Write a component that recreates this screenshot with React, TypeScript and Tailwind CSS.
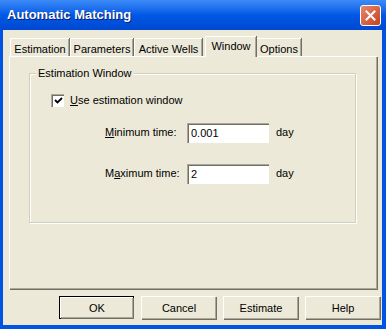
import React from "react";

const font = { fontFamily: '"Liberation Sans", Arial, sans-serif' };

function Tab({ label, active, w }: { label: string; active?: boolean; w: string }) {
  if (active) {
    return (
      <div className={`relative z-10 -mb-[1px] ml-[2px] flex h-[21px] ${w} items-start justify-center border-l border-t border-white bg-[#ECE9D8] pt-[2px] shadow-[inset_-1px_0_0_#ACA899,1px_0_0_#716F64]`}>
        <span className="text-[11px] leading-[14px] text-black">{label}</span>
      </div>
    );
  }
  return (
    <div className={`mr-[1px] mt-[2px] flex h-[18px] ${w} items-start justify-center border-l border-t border-white bg-[#ECE9D8] pt-[3px] shadow-[inset_-1px_0_0_#ACA899,1px_0_0_#716F64]`}>
      <span className="text-[11px] leading-[14px] text-black">{label}</span>
    </div>
  );
}

function Btn({ label, isDefault }: { label: string; isDefault?: boolean }) {
  return (
    <div
      className={`flex h-[23px] w-[75px] items-center justify-center text-[11px] text-black ${
        isDefault ? "border border-black" : ""
      }`}
    >
      <div className="flex h-full w-full items-center justify-center border-l border-t border-white bg-[#ECE9D8] shadow-[inset_-1px_-1px_0_#ACA899,1px_1px_0_#716F64]">
        {label}
      </div>
    </div>
  );
}

function Field({ value }: { value: string }) {
  return (
    <div className="flex h-[20px] w-[82px] items-center border-l border-t border-[#ACA899] bg-white pl-[3px] text-[11px] text-black shadow-[inset_1px_1px_0_#716F64]">
      {value}
    </div>
  );
}

export default function App() {
  return (
    <div style={font} className="flex h-[329px] w-[386px] select-none flex-col overflow-hidden bg-[#0054E3]">
      {/* title bar */}
      <div className="flex h-[30px] shrink-0 items-center justify-between bg-gradient-to-b from-[#3D8BF7] via-[#0058E6] to-[#0049D0] pl-[7px] pr-[5px]">
        <span className="text-[13px] font-bold text-white [text-shadow:1px_1px_0_#0A1E6E]">
          Automatic Matching
        </span>
        <div className="flex h-[21px] w-[21px] items-center justify-center rounded-[3px] border border-white bg-gradient-to-br from-[#E9866A] to-[#C5401C]">
          <svg width="11" height="11" viewBox="0 0 11 11">
            <path d="M1.5 1.5 L9.5 9.5 M9.5 1.5 L1.5 9.5" stroke="white" strokeWidth="2" strokeLinecap="square" />
          </svg>
        </div>
      </div>

      {/* body */}
      <div className="mb-[4px] ml-[3px] mr-[4px] flex flex-1 flex-col bg-[#ECE9D8] pl-[6px] pr-[1px] pt-[6px]">
        <div className="flex pl-[1px]">
          <Tab label="Estimation" w="w-[59px]" />
          <Tab label="Parameters" w="w-[63px]" />
          <Tab label="Active Wells" w="w-[68px]" />
          <Tab label="Window" w="w-[51px]" active />
          <Tab label="Options" w="w-[45px]" />
        </div>
        <div className="h-[233px] w-[368px] border-l border-t border-white px-[19px] pt-[10px] shadow-[inset_-1px_-1px_0_#ACA899,1px_1px_0_#716F64]">
          <div className="relative mt-[6px] h-[150px] w-[327px] border border-[#D0D0BF] shadow-[inset_1px_1px_0_white,1px_1px_0_white]">
            <span className="absolute -top-[8px] left-[6px] bg-[#ECE9D8] px-[2px] text-[11px] leading-[14px] text-black">
              Estimation Window
            </span>
            <div className="flex flex-col pl-[21px] pt-[18px]">
              <div className="flex items-center gap-[6px]">
                <div className="flex h-[13px] w-[13px] items-center justify-center border-l border-t border-[#ACA899] bg-white shadow-[inset_1px_1px_0_#716F64]">
                  <svg width="9" height="9" viewBox="0 0 9 9">
                    <path d="M1 4 L3.5 6.5 L8 2" stroke="black" strokeWidth="1.8" fill="none" />
                  </svg>
                </div>
                <span className="text-[11px] text-black">
                  <span className="underline">U</span>se estimation window
                </span>
              </div>
              <div className="mt-[14px] flex items-center pl-[54px]">
                <span className="w-[82px] text-[11px] text-black">
                  <span className="underline">M</span>inimum time:
                </span>
                <Field value="0.001" />
                <span className="ml-[7px] text-[11px] text-black">day</span>
              </div>
              <div className="mt-[21px] flex items-center pl-[54px]">
                <span className="w-[82px] text-[11px] text-black">
                  M<span className="underline">a</span>ximum time:
                </span>
                <Field value="2" />
                <span className="ml-[7px] text-[11px] text-black">day</span>
              </div>
            </div>
          </div>
        </div>
        <div className="mt-[7px] flex justify-end gap-[7px] pr-[1px]">
          <Btn label="OK" isDefault />
          <Btn label="Cancel" />
          <Btn label="Estimate" />
          <Btn label="Help" />
        </div>
      </div>
    </div>
  );
}
